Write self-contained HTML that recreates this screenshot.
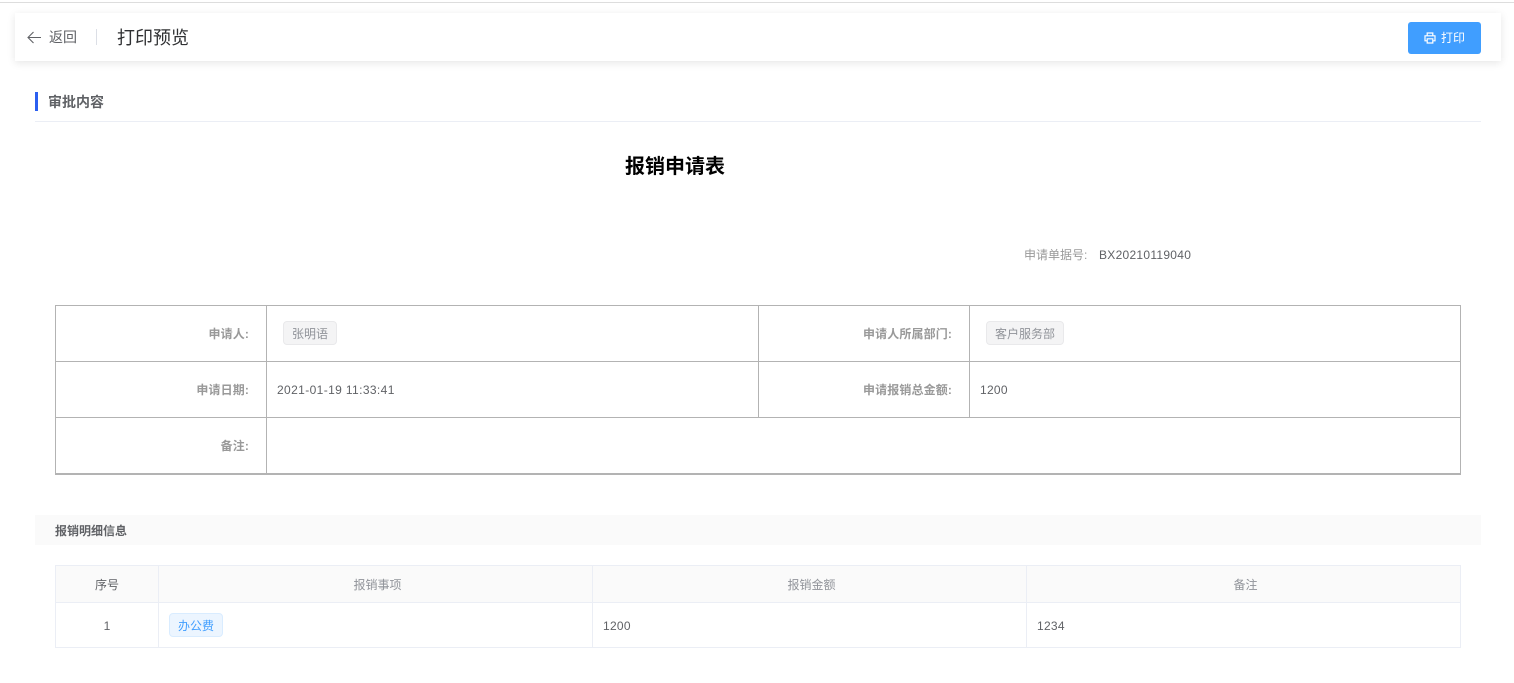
<!DOCTYPE html>
<html lang="zh"><head><meta charset="utf-8"><title>打印预览</title>
<style>
html,body{margin:0;padding:0;background:#fff;width:1514px;height:683px;overflow:hidden}
body{position:relative;font-family:"Liberation Sans","Noto Sans CJK SC",sans-serif;font-size:12px;color:#606266}
.a{position:absolute;white-space:nowrap}
.t{line-height:20px;height:20px}
.n{letter-spacing:.28px}
.l{background:#b3b3b3;position:absolute}
.m{background:#ebeef5;position:absolute}
.lab{font-weight:700;color:#999;text-align:right;letter-spacing:.12px}
.tag{position:absolute;box-sizing:border-box;height:24px;line-height:23px;padding-top:1px;border:1px solid #e9e9eb;background:#f4f4f5;color:#909399;border-radius:4px;text-align:center;font-size:12px;white-space:nowrap}
.h{color:#909399;text-align:center;font-size:12px}
</style></head><body>
<div class="a" style="left:0;top:2px;width:1514px;height:1px;background:#ddd"></div>
<div class="a" style="left:15px;top:13px;width:1486px;height:48px;background:#fff;box-shadow:0 2px 8px rgba(0,0,0,.1)"></div>
<svg class="a" style="left:27px;top:30px" width="15" height="15" viewBox="0 0 15 15" fill="none" stroke="#606266" stroke-width="1.1"><path d="M1 7.5H14M6.5 2L1 7.5L6.5 13"/></svg>
<div class="a t" style="left:49px;top:27px;font-size:14px;color:#606266">返回</div>
<div class="a" style="left:96px;top:29px;width:1px;height:16px;background:#dcdfe6"></div>
<div class="a" style="left:117px;top:25px;font-size:18px;line-height:26px;color:#303133">打印预览</div>
<div class="a" style="left:1408px;top:22px;width:73px;height:32px;background:#409eff;border-radius:3px"></div>
<svg class="a" style="left:1424px;top:32px" width="12" height="12" viewBox="0 0 12 12" fill="none" stroke="#fff" stroke-width="1.2"><path d="M3.2 3.6V1H8.8V3.6M2.8 8.8H1V3.8H11V8.8H9.2M3.2 6.8H8.8V11H3.2Z"/></svg>
<div class="a t" style="left:1441px;top:28px;color:#fff;font-size:12px">打印</div>

<div class="a" style="left:35px;top:92px;width:3px;height:19px;background:#2b5ff0"></div>
<div class="a t" style="left:48px;top:92px;font-size:14px;line-height:21px;font-weight:700;color:#606266">审批内容</div>
<div class="a" style="left:35px;top:121px;width:1446px;height:1px;background:#ebeef5"></div>

<div class="a" style="left:625px;top:153px;font-size:20px;line-height:28px;font-weight:700;color:#000">报销申请表</div>
<div class="a t" style="left:1024px;top:245px;color:#999">申请单据号:</div>
<div class="a t n" style="left:1099px;top:245px;color:#606266">BX20210119040</div>

<div class="l" style="left:55px;top:305px;width:1406px;height:1px"></div>
<div class="l" style="left:55px;top:361px;width:1406px;height:1px"></div>
<div class="l" style="left:55px;top:417px;width:1406px;height:1px"></div>
<div class="l" style="left:55px;top:473px;width:1406px;height:2px"></div>
<div class="l" style="left:55px;top:305px;width:1px;height:170px"></div>
<div class="l" style="left:266px;top:305px;width:1px;height:170px"></div>
<div class="l" style="left:758px;top:305px;width:1px;height:113px"></div>
<div class="l" style="left:969px;top:305px;width:1px;height:113px"></div>
<div class="l" style="left:1460px;top:305px;width:1px;height:170px"></div>

<div class="a t lab" style="left:60px;width:189px;top:324px">申请人:</div>
<div class="a t lab" style="left:760px;width:192px;top:324px">申请人所属部门:</div>
<div class="a t lab" style="left:60px;width:189px;top:380px">申请日期:</div>
<div class="a t lab" style="left:760px;width:192px;top:380px">申请报销总金额:</div>
<div class="a t lab" style="left:60px;width:189px;top:436px">备注:</div>
<div class="tag" style="left:283px;top:321px;width:54px">张明语</div>
<div class="tag" style="left:986px;top:321px;width:78px">客户服务部</div>
<div class="a t" style="left:277px;top:380px;letter-spacing:.38px">2021-01-19 11:33:41</div>
<div class="a t n" style="left:980px;top:380px">1200</div>

<div class="a" style="left:35px;top:515px;width:1446px;height:30px;background:#fafafa"></div>
<div class="a t" style="left:55px;top:521px;font-weight:700;color:#606266">报销明细信息</div>

<div class="a" style="left:55px;top:565px;width:1406px;height:38px;background:#fafafa"></div>
<div class="m" style="left:55px;top:565px;width:1406px;height:1px"></div>
<div class="m" style="left:55px;top:602px;width:1406px;height:1px"></div>
<div class="m" style="left:55px;top:647px;width:1406px;height:1px"></div>
<div class="m" style="left:55px;top:565px;width:1px;height:83px"></div>
<div class="m" style="left:158px;top:565px;width:1px;height:83px"></div>
<div class="m" style="left:592px;top:565px;width:1px;height:83px"></div>
<div class="m" style="left:1026px;top:565px;width:1px;height:83px"></div>
<div class="m" style="left:1460px;top:565px;width:1px;height:83px"></div>

<div class="a t h" style="left:56px;width:102px;top:575px;color:#606266">序号</div>
<div class="a t h" style="left:161px;width:433px;top:575px">报销事项</div>
<div class="a t h" style="left:595px;width:433px;top:575px">报销金额</div>
<div class="a t h" style="left:1029px;width:433px;top:575px">备注</div>
<div class="a t" style="left:56px;width:102px;top:616px;text-align:center">1</div>
<div class="tag" style="left:169px;top:613px;width:54px;background:#ecf5ff;border-color:#d9ecff;color:#409eff">办公费</div>
<div class="a t n" style="left:603px;top:616px">1200</div>
<div class="a t n" style="left:1037px;top:616px">1234</div>
</body></html>
